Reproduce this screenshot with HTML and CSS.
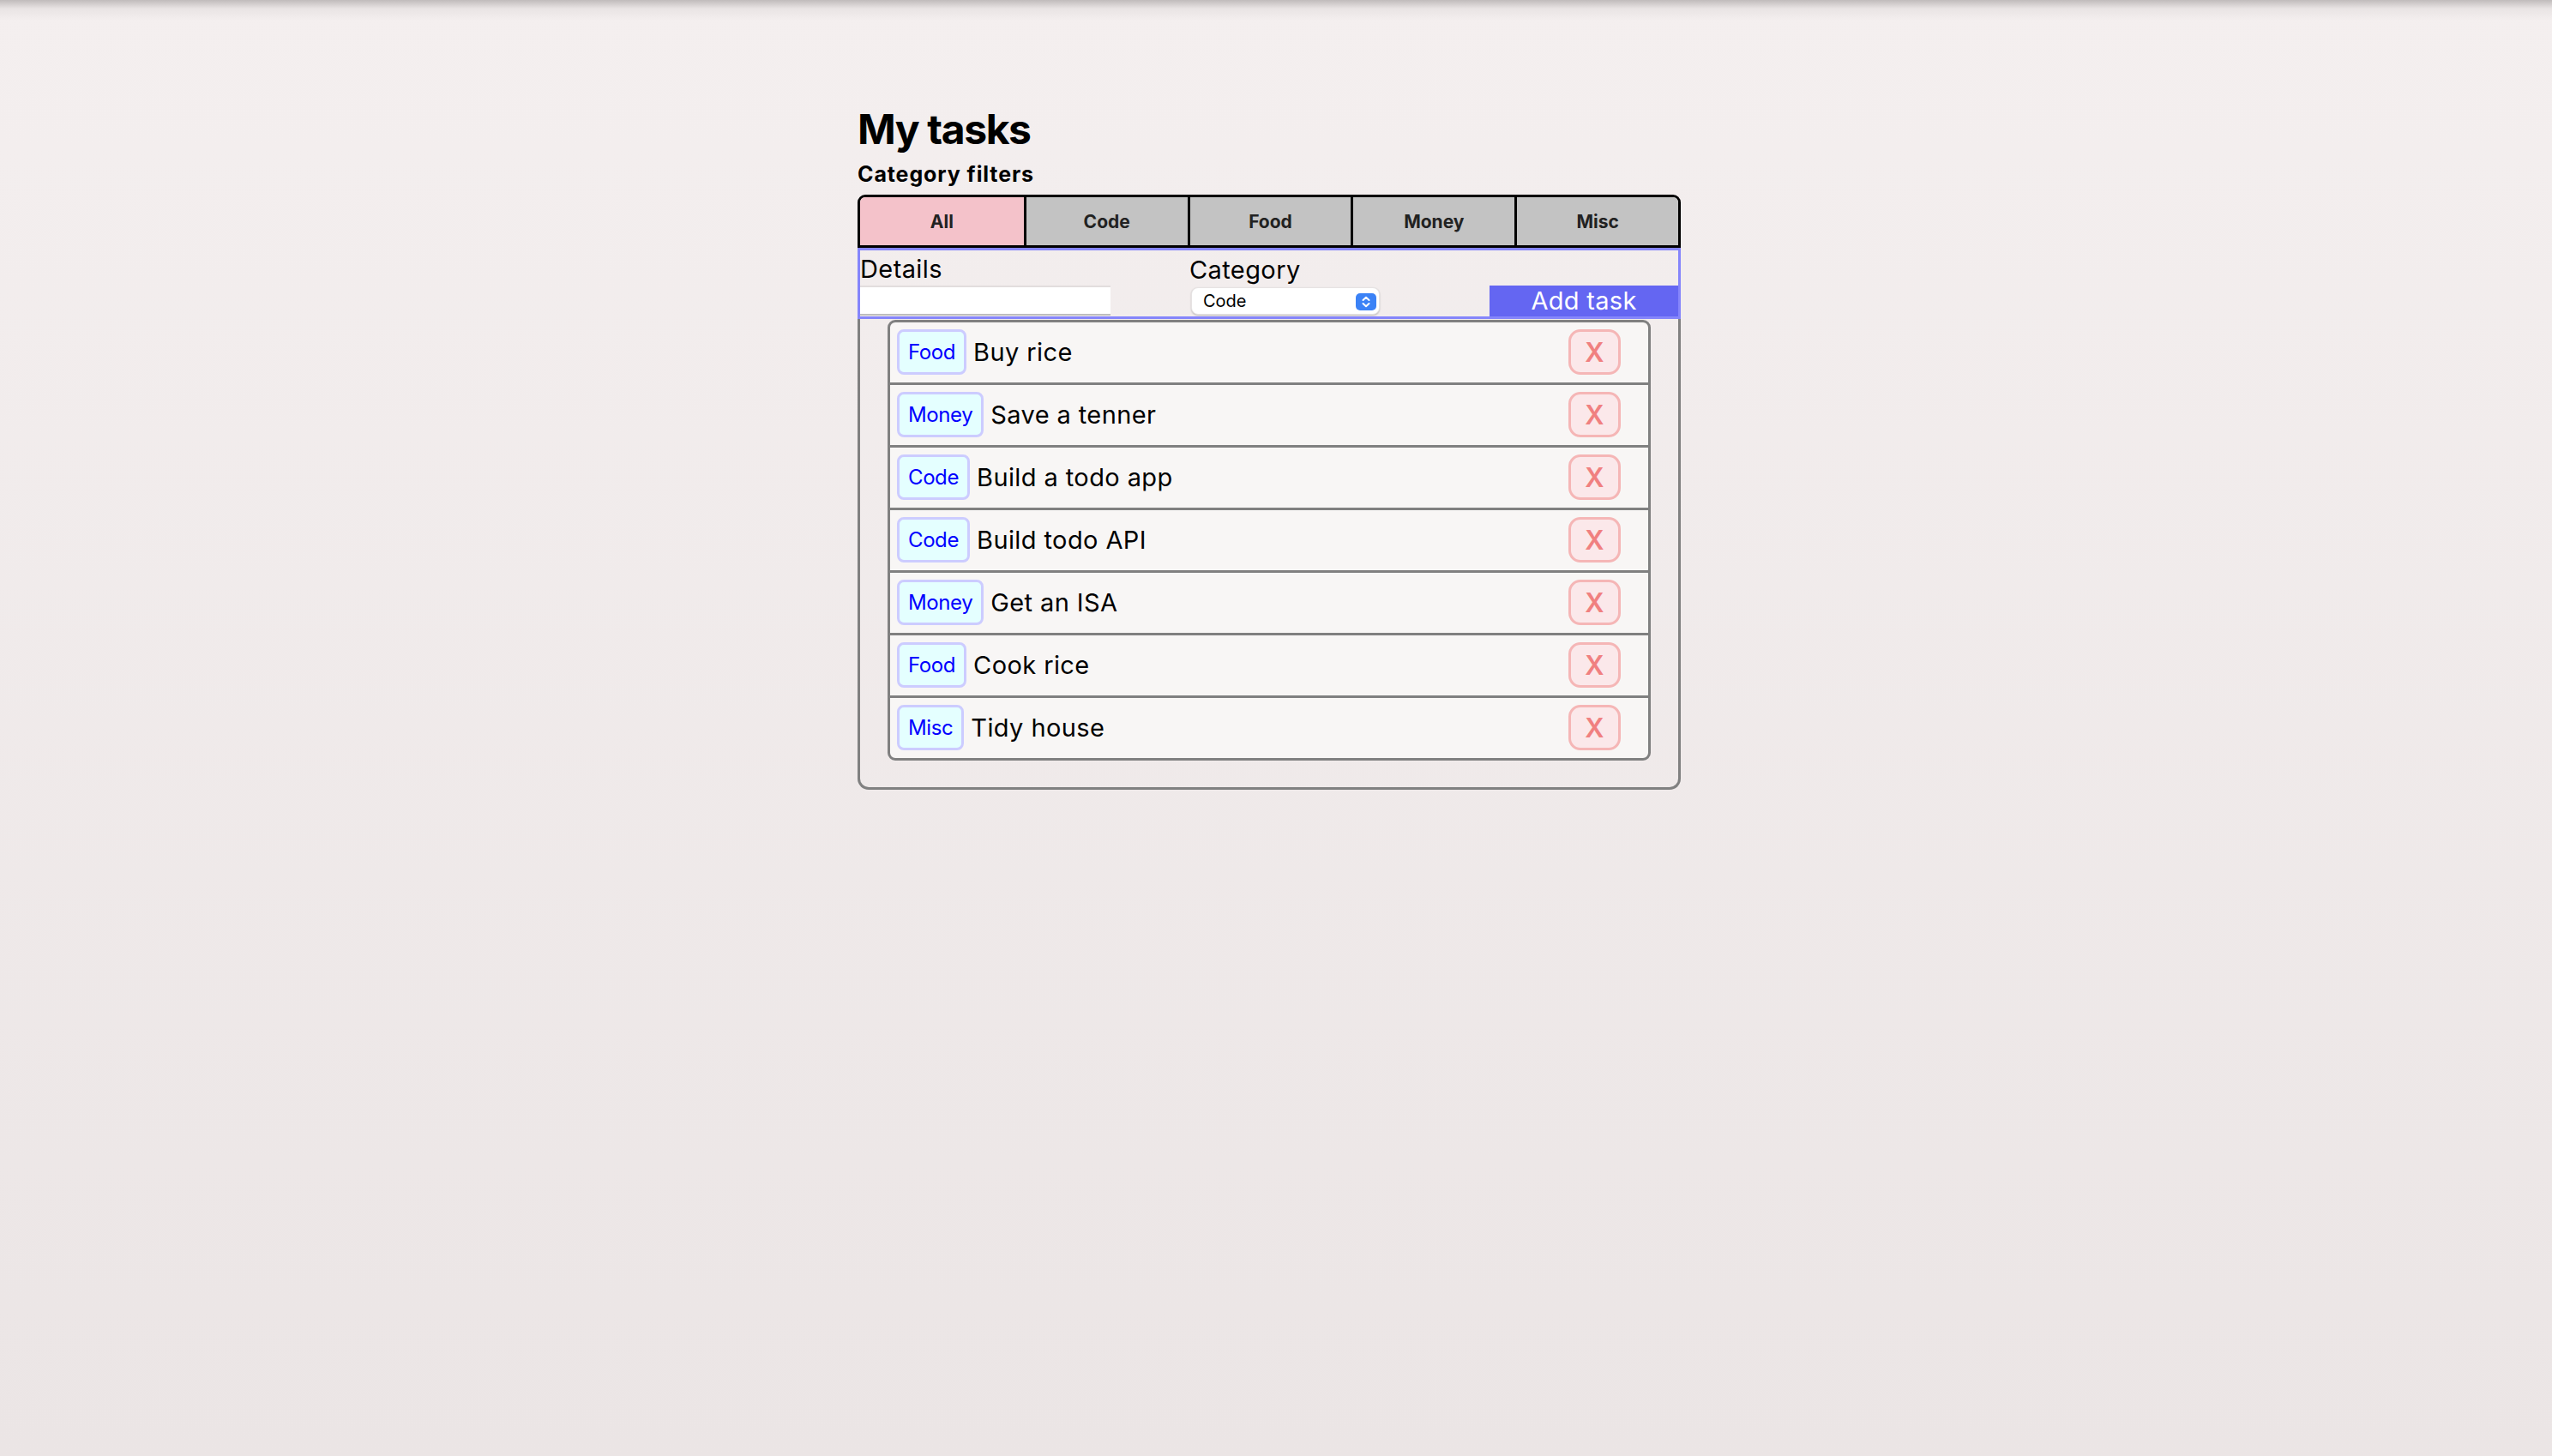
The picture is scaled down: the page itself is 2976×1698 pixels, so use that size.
FILE: index.html
```html
<!DOCTYPE html>
<html lang="en">
<head>
<meta charset="utf-8">
<title>My tasks</title>
<link rel="stylesheet" href="styles.css">
</head>
<body>
<div class="app">
  <h1 class="title">My tasks</h1>
  <div class="filters-label">Category filters</div>
  <div class="tabs">
    <button class="tab active">All</button>
    <button class="tab">Code</button>
    <button class="tab">Food</button>
    <button class="tab">Money</button>
    <button class="tab">Misc</button>
  </div>
  <form class="add-form">
    <div class="field field-details">
      <label class="field-label" for="details">Details</label>
      <input class="details-input" id="details" type="text">
    </div>
    <div class="field field-category">
      <label class="field-label" for="category">Category</label>
      <div class="select-wrap">
        <select class="category-select" id="category">
          <option>Code</option>
          <option>Food</option>
          <option>Money</option>
          <option>Misc</option>
        </select>
        <span class="stepper"><svg width="24" height="20" viewBox="0 0 24 20"><path d="M8.5 8 L12 4.8 L15.5 8" fill="none" stroke="#fff" stroke-width="2" stroke-linecap="round" stroke-linejoin="round"/><path d="M8.5 12 L12 15.2 L15.5 12" fill="none" stroke="#fff" stroke-width="2" stroke-linecap="round" stroke-linejoin="round"/></svg></span>
      </div>
    </div>
    <button class="add-btn" type="button">Add task</button>
  </form>
  <div class="list-wrap">
    <ul class="task-list">
      <li class="task"><span class="tag">Food</span><span class="task-text">Buy rice</span><button class="del">X</button></li>
      <li class="task"><span class="tag">Money</span><span class="task-text">Save a tenner</span><button class="del">X</button></li>
      <li class="task"><span class="tag">Code</span><span class="task-text">Build a todo app</span><button class="del">X</button></li>
      <li class="task"><span class="tag">Code</span><span class="task-text">Build todo API</span><button class="del">X</button></li>
      <li class="task"><span class="tag">Money</span><span class="task-text">Get an ISA</span><button class="del">X</button></li>
      <li class="task"><span class="tag">Food</span><span class="task-text">Cook rice</span><button class="del">X</button></li>
      <li class="task"><span class="tag">Misc</span><span class="task-text">Tidy house</span><button class="del">X</button></li>
    </ul>
  </div>
</div>
</body>
</html>
```
FILE: styles.css
```css
html, body {
  margin: 0;
  height: 100%;
}
body {
  font-family: Inter, "Noto Sans", "Liberation Sans", sans-serif;
  color: #000;
  background:
    linear-gradient(to bottom, rgba(150,145,145,0.55) 0px, rgba(200,195,195,0.25) 10px, rgba(243,238,238,0) 24px),
    linear-gradient(to bottom, #f4efef 0%, #ebe5e5 100%);
  padding: 122px 16px 0 0;
  box-sizing: border-box;
  min-height: 1698px;
}
.app {
  width: 960px;
  margin: 0 auto;
}
.title {
  margin: 0;
  font-size: 48px;
  line-height: 58px;
  font-weight: 700;
  letter-spacing: -1.4px;
}
.filters-label {
  margin-top: 9px;
  font-size: 25px;
  line-height: 29px;
  font-weight: 700;
  letter-spacing: 0.9px;
}
.tabs {
  margin-top: 9px;
  display: grid;
  grid-template-columns: repeat(5, 1fr);
  border: 3px solid #000;
  border-radius: 9px 9px 0 0;
  overflow: hidden;
  height: 62px;
  box-sizing: border-box;
}
.tab {
  font-family: Inter, "Noto Sans", sans-serif;
  font-size: 21px;
  font-weight: 700;
  color: #222;
  background: #c3c3c3;
  border: none;
  border-left: 3px solid #000;
  padding: 0;
  margin: 0;
}
.tab:first-child {
  border-left: none;
}
.tab.active {
  background: #f4c2ca;
}
.add-form {
  display: flex;
  align-items: flex-end;
  border: 3px solid #8585fb;
  height: 83px;
  box-sizing: border-box;
  margin: 0;
}
.field {
  display: flex;
  flex-direction: column;
}
.field-details {
  width: 384px;
}
.field-category {
  width: 350px;
}
.field-label {
  font-size: 29px;
  line-height: 41px;
  letter-spacing: 0.4px;
}
.field-details .field-label {
  line-height: 38px;
}
.details-input {
  width: 292px;
  height: 35px;
  box-sizing: border-box;
  margin: 0 0 1px 0;
  border: none;
  border-top: 2px solid #e2dddd;
  border-bottom: 2px solid #bdbdbd;
  background: #fff;
  padding: 0 6px;
  font-size: 20px;
}
.select-wrap {
  position: relative;
  width: 220px;
  height: 32px;
  margin: 0 0 2px 2px;
}
.category-select {
  appearance: none;
  -webkit-appearance: none;
  width: 100%;
  height: 100%;
  box-sizing: border-box;
  border: 1px solid #e6e3e3;
  border-radius: 8px;
  background: #fff;
  box-shadow: 0 1px 2px rgba(0,0,0,0.22);
  font-family: Inter, "Noto Sans", sans-serif;
  font-size: 20px;
  color: #000;
  padding: 0 0 0 13px;
  margin: 0;
}
.stepper {
  position: absolute;
  right: 4px;
  top: 7px;
  width: 24px;
  height: 20px;
  border-radius: 5px;
  background: #3b82f6;
  display: flex;
  pointer-events: none;
}
.add-btn {
  width: 220px;
  height: 36px;
  border: none;
  background: #6466f2;
  color: #fff;
  font-family: Inter, "Noto Sans", sans-serif;
  font-size: 29px;
  line-height: 36px;
  letter-spacing: 0.3px;
  padding: 0;
  margin: 0;
}
.list-wrap {
  border: 3px solid #808080;
  border-top: none;
  border-radius: 0 0 13px 13px;
  padding: 1px 32px 31px 32px;
}
.task-list {
  list-style: none;
  margin: 0;
  padding: 0;
  border: 3px solid #808080;
  border-radius: 9px;
  background: #f8f6f5;
  overflow: hidden;
}
.task {
  display: flex;
  align-items: center;
  height: 73px;
  padding: 0 32px 2px 8px;
  box-sizing: border-box;
  border-top: 3px solid #808080;
}
.task:first-child {
  border-top: none;
  height: 70px;
}
.tag {
  display: flex;
  align-items: center;
  height: 53px;
  box-sizing: border-box;
  padding: 0 10px;
  border: 3px solid #ccccff;
  border-radius: 8px;
  background: #e4ffff;
  color: #0000ff;
  font-size: 24px;
  letter-spacing: -0.4px;
}
.task-text {
  flex: 1;
  margin-left: 8px;
  font-size: 29px;
  letter-spacing: 0.4px;
}
.del {
  width: 61px;
  height: 53px;
  box-sizing: border-box;
  border: 3px solid #f5b6b6;
  border-radius: 14px;
  background: #fbe8ea;
  color: #f08080;
  font-family: Inter, "Noto Sans", sans-serif;
  font-size: 31px;
  font-weight: 600;
  padding: 0;
  margin: 0;
}
```
